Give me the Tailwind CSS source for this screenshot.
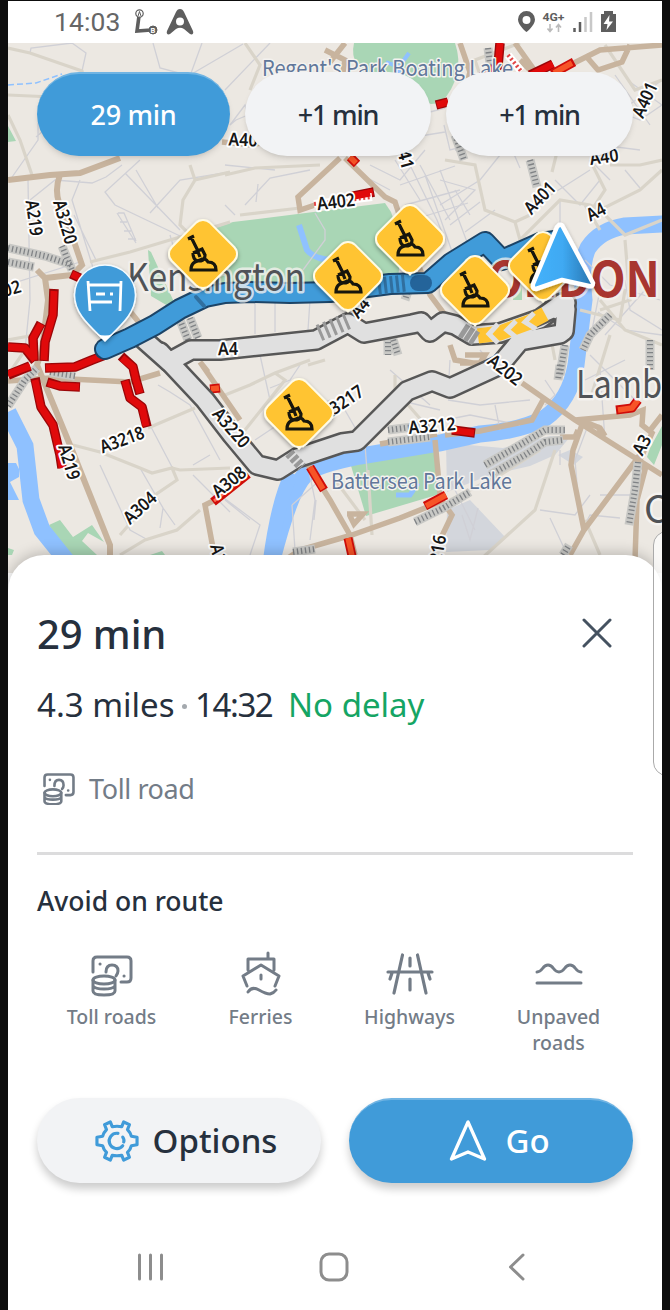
<!DOCTYPE html>
<html lang="en">
<head>
<meta charset="utf-8">
<title>Route overview</title>
<script src="https://cdn.jsdelivr.net/npm/@tailwindcss/browser@4"></script>
</head>
<body class="bg-[#0d0d0d] font-['Noto_Sans',sans-serif]">
<div class="relative ml-2 mt-px flex h-[1309px] w-[654px] flex-col overflow-hidden bg-white">

  <!-- Status bar -->
  <header class="flex h-[42px] shrink-0 items-center justify-between pl-[46px] pr-[46px] text-[#666]">
    <div class="flex items-center">
      <span class="w-[80px] font-['Roboto',sans-serif] text-[26.5px] leading-none tracking-[0.1px]">14:03</span>
      <svg width="24" height="28" viewBox="134 8 24 28" fill="none" stroke="#5e5e5e">
        <path d="M139 16L137 31L151 30" stroke-width="3.6"/>
        <circle cx="139.500" cy="13.500" r="3.700" fill="#fff" stroke-width="1.200"/>
        <path d="M138 16l1.500-4.500l1.500 4.500" stroke-width="1"/>
        <circle cx="153" cy="30" r="4" fill="#5e5e5e"/>
        <text x="150.600" y="32.800" font-size="7.500" font-weight="700" fill="#fff" stroke="none" font-family="Roboto">B</text>
      </svg>
      <svg class="ml-2" width="28" height="28" viewBox="166 8 28 28"><path fill="#5e5e5e" fill-rule="evenodd" d="M180 9c-2 0-3 1-4 3l-9 19c-1 3 1 4 3 3l6-5q4-2.500 8 0l6 5c2 1 4 0 3-3l-9-19c-1-2-2-3-4-3zm0 8.500a4 4 0 1 1 0 8a4 4 0 1 1 0-8z"/></svg>
    </div>
    <svg width="100" height="28" viewBox="516 8 100 28" fill="#5e5e5e">
      <path fill-rule="evenodd" d="M526.500 11a8.500 8.500 0 0 0-8.500 8.500c0 6 8.500 12.500 8.500 12.500s8.500-6.500 8.500-12.500a8.500 8.500 0 0 0-8.500-8.500zm0 5a4 4 0 1 1 0 8a4 4 0 1 1 0-8z"/>
      <text x="542.500" y="21" font-size="11.500" font-weight="700" font-family="Roboto" textLength="22" lengthAdjust="spacingAndGlyphs">4G+</text>
      <path d="M550 24v7m-2.500-2.500l2.500 3l2.500-3M558.500 32v-7m-2.500 2.500l2.500-3l2.500 3" fill="none" stroke="#bbb" stroke-width="1.600"/>
      <path d="M574.500 32v-4M580 32v-10" stroke="#5e5e5e" stroke-width="2.500"/><path d="M585.500 32v-15M591 32v-20" stroke="#c8c8c8" stroke-width="2.500"/>
      <path d="M604 11h9v3h3v18h-15v-18h3z"/>
      <path d="M609.500 15l-6 9h4l-1 6l6.500-8.500h-4z" fill="#fff"/>
    </svg>
  </header>

  <!-- Map -->
  <section class="relative h-[530px] shrink-0 bg-[#ece8e2]">
    <svg class="block" width="654" height="530" viewBox="8 43 654 530" font-family="Noto Sans, sans-serif">
      <defs>
        <g id="dig">
          <path d="M-8 27L0 37L8 27z" fill="#fffbe5"/>
          <rect x="-27" y="-27" width="54" height="54" rx="10" transform="rotate(45)" fill="#ffc431" stroke="#fffbe5" stroke-width="2"/>
          <path d="M-15-15L-9-18M-12-17L-5-3M-10-1L-1-5L2 1Q2 6-2 7L-6 7Q-10 5-10-1M-5-2L-3 3M-12 16Q-12 10-8 8L-3 6Q2 3 5 8Q13 8 13 16z" fill="none" stroke="#15120a" stroke-width="3.200"/>
        </g>
        <filter id="sh" x="-30%" y="-30%" width="160%" height="160%"><feDropShadow dx="0" dy="2" stdDeviation="2" flood-opacity=".35"/></filter>
      </defs>

      <!-- Parks and districts -->
      <g fill="#a9d6b5">
        <path d="M354 43H455Q466 75 441 103L431 104L380 85Q348 68 354 43z"/>
        <path d="M200 233L233 222L385 203L391 212L401 240L398 282L320 284L215 285z"/>
        <path d="M8 126L16 141L8 142zM148 250L151 252L174 302L168 306L151 296z"/>
        <path d="M349 459L435 442L440 494L366 516z"/>
        <path d="M49 525L60 520L73 537L92 525L104 542L88 533L82 541L97 555H66zM150 555l12-4l3 4zM8 548l6 2l-2 5h-4z"/>
        <path d="M662 426l-12 22l-3 9l7 8l8-20zM513 275h9v25h-9z"/>
      </g>
      <g fill="#d3d6dc"><path d="M446 443L503 448L550 436L570 437L555 455L530 466L490 475L447 492zM447 510L470 500L506 538L490 550L446 552zM558 455l12-5l13 7l-9 8z"/></g>

      <!-- Water -->
      <g fill="none" stroke="#8fc1ff">
        <path d="M8 412L25 446L31 500L42 530L70 565" stroke-width="17"/>
        <path d="M664 224L625 226Q600 230 588 248Q580 264 584 300L576 365Q570 400 545 418Q520 431 480 434L440 443L360 456Q315 465 305 475Q290 490 272 560" stroke-width="17"/>
        <path d="M292 473Q278 500 270 560" stroke-width="14"/>
        <path d="M299 225L307 250Q315 260 335 260L362 262L375 273" stroke-width="6"/>
        <path d="M396 495h14l8-12" stroke-width="5"/>
        <path d="M8 255L34 254L70 240" stroke-width="0"/>
        <path d="M8 85L36 83L62 74" stroke-width="1.500" stroke-dasharray="6 3"/>
        <path d="M386 62l13 5l10-14M399 67v8" stroke-width="4"/>
      </g>
      <path d="M8 463h8l3 6v8l-9 5l9 18h-11z" fill="#8fc1ff"/>

      <!-- Minor streets -->
      <g fill="none" stroke="#d0d0d6" stroke-width="1.300">
        <path d="M30 53L31 48L72 43M72 43L86 53L82 71M153 43L160 68L190 76L202 43M243 44L190 75M38 123V140L10 180M74 105L36 137M230 125L245 105L248 115L236 120zM270 43L225 90M30 200L55 180L92 183L106 177L122 165M140 160L105 192L115 205L180 236M125 173L180 230M150 213L180 180L230 172M136 170L158 208M74 215L96 260M117 213L136 243M118 213h6l12 28M120 222h7M124 231h7M128 239h8M80 180L72 200L90 258L100 290M170 235L175 252M28 180L30 300L25 350M8 285L80 262"/>
        <path d="M245 205L270 178L310 170M258 184L256 202M225 205L235 215M275 170L225 165M315 213L325 230V240L303 270M255 300V334M275 302V332M310 300L308 330M370 165L400 180L425 150M362 175L390 190M410 165L437 220L445 240M420 165L450 220M400 185L455 166M405 205L460 190M412 220L468 203M425 175L455 260M440 170L470 250M395 160L420 200"/>
        <path d="M444 125L450 150L490 140M400 120L445 108M408 138L445 132M455 150L510 145L520 168M440 180L475 190L445 220M455 190L470 215M440 205L480 180L500 155M450 225L480 202M465 232L495 210M555 180L580 205L600 180M560 200V230M535 205L590 170M590 160L610 180M615 75L650 125M630 82L662 105M640 150L600 145L580 125M625 170L640 188M662 80L620 112L640 120L662 105"/>
        <path d="M150 425L172 467M100 465L130 530L148 540M140 468L163 508L160 528M163 508L175 525M193 475L230 512M158 385L170 392L190 405L220 460M193 465L210 455M220 495L260 525L250 555M292 505L320 480M292 505L295 550M316 500L314 520M225 500L250 520M305 452L315 500L310 540M342 405L365 445L370 510"/>
        <path d="M448 400L480 405L530 400M495 405L500 430M445 420L470 415L520 425M540 510L575 515L590 495M550 518L565 550M582 530L590 515L620 518M450 480L475 530M462 515L470 540L478 508M600 495h35M590 420L575 460L580 520M600 370L605 440M590 355L635 400M560 450V465"/>
        <path d="M585 260L610 285L660 300M625 280L630 310L662 330M598 312L625 330L662 335M600 290L590 340M605 335L645 290M585 380L625 360M545 380L555 395L545 405M255 440L285 420L330 400M270 388L290 380L300 365M260 355L270 400M390 370L430 405M370 415L398 400L440 410M480 350L500 375M450 360L448 395"/>
      </g>
      <g fill="none" stroke="#d9d4c9" stroke-width="3.200">
        <path d="M8 48L30 53L82 71L90 105M8 95L75 98M8 115L20 140L32 175M190 165L195 180L183 200L180 225L190 235L230 222M230 222L130 252L90 262M245 43L260 65L250 90M240 215L300 208M195 180L230 172M225 175L255 168L320 165"/>
        <path d="M480 75L475 60L520 43M445 160L475 165L485 210L515 222L530 215M515 222L520 240L560 200L590 205L600 210L640 190L662 170M590 160L605 190L595 205L625 235L662 220M610 165L640 165L662 160M600 300L625 330L662 345M625 240L630 300L600 310M610 335L590 400M580 310L620 320L625 290M540 280L555 360M600 230L585 205"/>
        <path d="M148 428L195 408M73 445L100 452L140 468L152 473L172 468L177 480L155 495L120 535M172 468L180 470L230 468M100 452L115 440M120 555L145 540L177 530L200 510M275 373L285 380L245 430L230 440M225 395L250 385L275 373L310 360M395 375V390L430 430M308 365L325 360M335 480L365 520M368 470L372 535M450 500L500 475L540 450M555 450L535 510L480 560M585 520L600 555"/>
        <path d="M8 340L35 335M8 375L25 350M445 105L480 115L455 135M520 80L550 110L560 140L552 172M605 45L635 90L662 80"/>
      </g>
      <!-- Major roads -->
      <g fill="none" stroke="#c8b49e" stroke-width="5.500">
        <path d="M8 180L50 175L80 173L120 158M60 175Q52 195 65 215L82 265L72 275L45 278L37 270M45 278L48 300L42 350L37 365L70 445L110 545V560" stroke-width="6"/>
        <path d="M8 381L50 378L130 382L160 373M125 305L145 330L170 362M200 362L208 372M200 362L240 420M340 158L298 197L300 210L315 205M345 158L385 197L395 202L401 220L430 295L445 315"/>
        <path d="M325 50L345 60L340 90M345 43L330 62M222 142L250 145L280 140M460 43L470 72L468 80M520 60L535 75M515 43L545 85M540 80L600 50L662 45M585 55L598 70L622 62L630 45"/>
        <path d="M215 500L205 505L213 548M308 465L330 500L350 535L355 555M352 535L300 550L285 560M352 535L400 518L445 500M347 514h16l-9 10l-4-8M435 440L440 495M445 505L452 515L440 540"/>
        <path d="M380 444L437 434M445 435L480 431L532 420L543 400M522 383L575 420L662 475M575 420L630 415L643 410L642 425L652 433L640 460M583 422L573 450L571 465L584 530M584 530L640 455M584 530L570 555M560 437L575 437L578 430M580 420l20 8l5 8l-8-10M636 455L645 470L637 500L635 560M662 415L648 433"/>
        <path d="M450 345L455 360L485 365M465 355h20l-5 8h-20"/>
      </g>

      <!-- Railways -->
      <g fill="none" stroke="#c8c8c5" stroke-width="9">
        <path d="M8 248L45 256L72 265M8 262L34 267M62 246L72 270M8 406L25 380L37 368M50 372L75 376M180 320L188 340M190 318L198 338"/>
        <path d="M488 48L492 80M455 135L464 160M530 160L537 187M410 285L405 300M388 338V355M392 336L398 355"/>
        <path d="M485 465L520 445L545 430L565 430M490 475L525 455L545 442L563 440M440 510L470 492M610 315L590 335L583 350M565 345L560 375M650 340V370M638 462L635 490L629 525M388 430L430 425M388 442L430 437M415 522L445 507M293 552L315 549M560 365L558 380M563 555l6-10"/>
      </g>
      <g fill="none" stroke="#808386" stroke-width="6" stroke-dasharray="1.300 2.700">
        <path d="M8 248L45 256L72 265M8 262L34 267M62 246L72 270M8 406L25 380L37 368M50 372L75 376M180 320L188 340M190 318L198 338"/>
        <path d="M488 48L492 80M455 135L464 160M530 160L537 187M410 285L405 300M388 338V355M392 336L398 355"/>
        <path d="M485 465L520 445L545 430L565 430M490 475L525 455L545 442L563 440M440 510L470 492M610 315L590 335L583 350M565 345L560 375M650 340V370M638 462L635 490L629 525M388 430L430 425M388 442L430 437M415 522L445 507M293 552L315 549M560 365L558 380M563 555l6-10"/>
      </g>

      <!-- Traffic -->
      <g fill="none" stroke-linejoin="round">
        <path d="M54 289L53 315L45 342L44 361M41 323L33 338L34 361M8 347L25 348L35 361M8 375L30 366M45 368L75 367L92 360L105 355M47 382L60 386L80 387M35 378L41 407L53 425L60 455L62 468M121 356L133 367L136 380L140 394M125 380L130 398L142 407L147 427M71 274l9 4M349 197L374 192M500 43L498 66L480 78M530 75L553 64M436 105L448 102M452 430L475 433" stroke="#9b0709" stroke-width="9.500"/>
        <path d="M54 291L53 315L45 342L44 360M41 324L33 338L34 360M8 347L25 348L35 360M8 374L30 366M46 368L75 367L92 360L105 355M48 383L60 386L79 387M35 380L41 407L53 425L60 455L62 468M122 358L133 367L136 380L140 393M125 381L130 398L142 407L146 426M72 274l8 4M350 197L373 192M500 43L498 66L480 78M531 75L553 64M437 105L448 102M452 430L474 433" stroke="#e00a0b" stroke-width="6.800"/>
        <path d="M310 467L324 490M348 538L352 556M425 506L446 495M616 410L632 408L638 400M213 502L248 474M210 389l10-1M350 157l7 7M552 74L574 62" stroke="#cf0d0a" stroke-width="9"/>
        <path d="M310 467L323 489M348 538L352 556M426 506L446 495M618 410L632 408L638 400M350 157l6 6M554 73L572 63M211 389l8-1" stroke="#f75427" stroke-width="5.500"/>
        <path d="M214 501L247 475" stroke="#ff6d50" stroke-width="3"/>
        <path d="M314 204l58-7M508 55l13 16" stroke="#fff" stroke-width="8"/><path d="M314 204l58-7M508 55l13 16" stroke="#e14545" stroke-width="4" stroke-dasharray="2 2.500"/>
        <path d="M349 197L370 193" stroke="#e00a0b" stroke-width="7"/>
      </g>

      <!-- Alternative routes -->
      <g fill="none" stroke-linejoin="round" stroke-linecap="round">
        <g stroke="#575757" stroke-width="22">
          <path d="M142 338L169 362L191 350L220 350L316 340L348 323L364 333L412 324L421 322L430 332L443 322L455 325L472 335L500 333L540 319L562 303L566 303"/>
          <path d="M160 352L205 400L232 435L257 465L278 470L297 458L342 443L357 441L378 420L407 391L432 381L450 388L500 365L520 341L560 334L564 331L566 309"/>
        </g>
        <g stroke="#e0e0e0" stroke-width="17">
          <path d="M142 338L169 362L191 350L220 350L316 340L348 323L364 333L412 324L421 322L430 332L443 322L455 325L472 335L500 333L540 319L562 303L566 303"/>
          <path d="M160 352L205 400L232 435L257 465L278 470L297 458L342 443L357 441L378 420L407 391L432 381L450 388L500 365L520 341L560 334L564 331L566 309"/>
        </g>
        <path d="M510 332L535 327L554 319" stroke="#575757" stroke-width="2.500"/>
        <path d="M478 336L500 333L530 322L545 314" stroke="#ffc431" stroke-width="15" stroke-linecap="butt"/>
        <path d="M498 324l-9 10l9 9M516 321l-9 9l11 9M534 313l-9 9l11 7" stroke="#e0e0e0" stroke-width="5" stroke-linecap="butt" stroke-linejoin="miter"/>
        <path d="M319 333L350 320" stroke="#999" stroke-width="17" stroke-dasharray="3 4" stroke-linecap="butt"/>
        <path d="M462 330L476 339" stroke="#999" stroke-width="15" stroke-linecap="butt" stroke-dasharray="5 1"/>
        <path d="M289 453l13 14" stroke="#999" stroke-width="10" stroke-linecap="butt" stroke-dasharray="4 2"/>
        <path d="M105 349L130 338L155 325L180 309L205 297L225 293L250 292L290 293L330 292L360 288L390 284L428 283L451 263L485 242L502 260L540 243L555 241" stroke="#1c4467" stroke-width="22"/>
        <path d="M105 349L130 338L155 325L180 309L205 297L225 293L250 292L290 293L330 292L360 288L390 284L428 283L451 263L485 242L502 260L540 243L555 241" stroke="#409bd9" stroke-width="18"/>
        <path d="M378 286L406 283" stroke="#306f9f" stroke-width="17" stroke-dasharray="3 3" stroke-linecap="butt"/>
        <path d="M418 283h6" stroke="#24649a" stroke-width="16"/>
        <path d="M196 297l8 9" stroke="#306f9f" stroke-width="4"/>
      </g>

      <!-- Place names -->
      <g stroke="#f4f2ef" stroke-width="5" stroke-linejoin="round" paint-order="stroke" font-family="Noto Sans CJK SC, Noto Sans, sans-serif">
        <text x="262" y="76" font-size="22" textLength="251" lengthAdjust="spacingAndGlyphs" fill="#61779a" stroke-width="3">Regent's Park Boating Lake</text>
        <text x="331" y="489" font-size="22" textLength="181" lengthAdjust="spacingAndGlyphs" fill="#61779a" stroke-width="3">Battersea Park Lake</text>
        <text x="127" y="291" font-size="38" textLength="178" lengthAdjust="spacingAndGlyphs" fill="#505357" stroke-opacity=".8">Kensington</text>
        <text x="576" y="398" font-size="38" textLength="86" lengthAdjust="spacingAndGlyphs" fill="#505357">Lamb</text>
        <text x="644" y="523" font-size="38" fill="#505357">C</text>
        <text x="463" y="297" font-size="49" font-weight="700" textLength="197" lengthAdjust="spacingAndGlyphs" fill="#a83630" stroke-opacity=".75">LONDON</text>
      </g>
      <!-- Road numbers -->
      <g fill="#161616" stroke="#fff" stroke-width="4" stroke-linejoin="round" paint-order="stroke" font-size="18" font-weight="600" text-anchor="middle">
        <text transform="translate(34 218) rotate(82)" y="6" textLength="36" lengthAdjust="spacingAndGlyphs">A219</text>
        <text transform="translate(65 222) rotate(74)" y="6" textLength="45" lengthAdjust="spacingAndGlyphs">A3220</text>
        <text transform="translate(7 290) rotate(-16)" y="6" textLength="28" lengthAdjust="spacingAndGlyphs">402</text>
        <text transform="translate(243 140) rotate(2)" y="6" textLength="29" lengthAdjust="spacingAndGlyphs">A40</text>
        <text transform="translate(336 202) rotate(-7)" y="6" textLength="38" lengthAdjust="spacingAndGlyphs">A402</text>
        <text transform="translate(404 154) rotate(75)" y="6" textLength="31" lengthAdjust="spacingAndGlyphs">A41</text>
        <text transform="translate(360 308) rotate(-50)" y="6" textLength="20" lengthAdjust="spacingAndGlyphs">A4</text>
        <text transform="translate(228 349) rotate(-1)" y="6" textLength="20" lengthAdjust="spacingAndGlyphs">A4</text>
        <text transform="translate(540 198) rotate(-46)" y="6" textLength="37" lengthAdjust="spacingAndGlyphs">A401</text>
        <text transform="translate(645 100) rotate(-66)" y="6" textLength="37" lengthAdjust="spacingAndGlyphs">A401</text>
        <text transform="translate(604 157) rotate(-8)" y="6" textLength="29" lengthAdjust="spacingAndGlyphs">A40</text>
        <text transform="translate(596 212) rotate(-27)" y="6" textLength="19" lengthAdjust="spacingAndGlyphs">A4</text>
        <text transform="translate(505 370) rotate(38)" y="6" textLength="38" lengthAdjust="spacingAndGlyphs">A202</text>
        <text transform="translate(342 403) rotate(-34)" y="6" textLength="48" lengthAdjust="spacingAndGlyphs">A3217</text>
        <text transform="translate(231 428) rotate(49)" y="6" textLength="46" lengthAdjust="spacingAndGlyphs">A3220</text>
        <text transform="translate(122 440) rotate(-20)" y="6" textLength="46" lengthAdjust="spacingAndGlyphs">A3218</text>
        <text transform="translate(69 462) rotate(73)" y="6" textLength="36" lengthAdjust="spacingAndGlyphs">A219</text>
        <text transform="translate(140 508) rotate(-42)" y="6" textLength="38" lengthAdjust="spacingAndGlyphs">A304</text>
        <text transform="translate(229 482) rotate(-39)" y="6" textLength="38" lengthAdjust="spacingAndGlyphs">A308</text>
        <text transform="translate(432 426) rotate(-5)" y="6" textLength="47" lengthAdjust="spacingAndGlyphs">A3212</text>
        <text transform="translate(642 445) rotate(-60)" y="6" textLength="20" lengthAdjust="spacingAndGlyphs">A3</text>
        <text transform="translate(437 554) rotate(-80)" y="6" textLength="38" lengthAdjust="spacingAndGlyphs">A216</text>
        <text transform="translate(220 562) rotate(77)" y="6" textLength="36" lengthAdjust="spacingAndGlyphs">A219</text>
      </g>

      <!-- Pins -->
      <g filter="url(#sh)">
        <use href="#dig" x="203" y="254"/><use href="#dig" x="410" y="239"/><use href="#dig" x="348" y="276"/><use href="#dig" x="299" y="413"/><use href="#dig" x="543" y="266"/><use href="#dig" x="475" y="290"/>
        <path d="M105 265A30.500 30.500 0 0 0 74.500 295C74.500 314 90 326 105 341C120 326 135.500 314 135.500 295A30.500 30.500 0 0 0 105 265z" fill="#409bd9" stroke="#f4fbff" stroke-width="1.500"/>
        <path d="M97 334l8 7l8-7q-8 3-16 0z" fill="#fff"/>
        <path d="M88 281l2 30M121 281l-1 30M88 285h33M90 302h22M96 294h9M110 294h3" fill="none" stroke="#fff" stroke-width="2.800"/>
      </g>
      <defs><linearGradient id="arrow" x1="0" y1="0" x2="1" y2="0"><stop offset="0" stop-color="#45b2fb"/><stop offset=".5" stop-color="#3fa9f2"/><stop offset="1" stop-color="#2774ae"/></linearGradient></defs>
      <path filter="url(#sh)" d="M559 225Q562 224 563 227L593 283Q593 287 589 286L562 280L536 289Q532 289 533 284L557 227z" fill="url(#arrow)" stroke="#fff" stroke-width="4.500" stroke-linejoin="round"/>
    </svg>
    <!-- Route tabs -->
    <nav class="absolute inset-x-[29px] top-[29px] flex h-[84px] gap-[15px] text-[27px] font-medium text-[#26303d]">
      <button class="w-[193px] rounded-full border-t-2 border-[#70b4e3] bg-[#409bd9] tracking-[-0.3px] text-white shadow-md">29 min</button>
      <button class="w-[186px] rounded-full bg-[#f2f3f5] pt-0.5 tracking-[-1.2px] shadow-md">+1 min</button>
      <button class="w-[187px] rounded-full bg-[#f2f3f5] pt-0.5 tracking-[-1.2px] shadow-md">+1 min</button>
    </nav>
  </section>

  <!-- Route details -->
  <main class="relative -mt-[18px] flex h-[664px] shrink-0 flex-col rounded-t-[36px] bg-white px-[29px] pt-[54px] text-[#26303d] shadow-[0_-2px_14px_rgba(0,0,0,0.22)]">
    <div class="flex h-[50px] items-center justify-between">
      <h1 class="text-[40px] font-medium leading-[50px] tracking-[-0.1px]">29 min</h1>
      <svg class="mr-[20px]" width="32" height="32" viewBox="0 0 32 32"><path d="M3 2L29 28M29 2L3 28" fill="none" stroke="#455260" stroke-width="3" stroke-linecap="round"/></svg>
    </div>
    <p class="mt-[24px] flex h-[44px] items-center text-[33px] leading-[44px]">
      <span class="w-[137px] whitespace-nowrap">4.3 miles</span><span class="mx-[8px] mt-0.5 size-[5px] rounded-full bg-[#a4a9ae]"></span><span class="w-[93px] whitespace-nowrap tracking-[-1.4px]">14:32</span><span class="whitespace-nowrap text-[#15a564]">No delay</span>
    </p>
    <div class="mt-[42px] flex h-[40px] items-center pl-[6px] text-[27px] text-[#737c87]">
      <svg class="mr-[14px]" width="32" height="32" viewBox="0 0 42 42" fill="none" stroke="#737c87" stroke-width="3.400" stroke-linecap="round">
        <path d="M2 17V6q0-4 4-4h30q4 0 4 4v19q0 4-4 4h-6M15 17q0-8 6-8t6 7q0 3-2 5"/><ellipse cx="13" cy="26" rx="11" ry="4.500"/><path d="M2 26v11q0 4 11 4t11-4V26M2 32q2 3 11 3t11-3"/><path d="M9 9h.1M33 23h.1"/>
      </svg>
      <span class="tracking-[-0.4px]">Toll road</span>
    </div>
    <hr class="mt-[43px] h-[3px] shrink-0 border-0 bg-[#dcdcdd]">
    <h2 class="mt-[28px] h-[36px] whitespace-nowrap text-[26.5px] font-medium leading-[36px]">Avoid on route</h2>
    <div class="mt-[31px] grid h-[111px] grid-cols-4 text-center text-[19.500px] font-medium leading-[26px] text-[#737c87]">
      <div class="flex flex-col items-center gap-[6px]">
        <svg width="44" height="48" viewBox="-1 -5 44 48" fill="none" stroke="#737c87" stroke-width="3" stroke-linecap="round"><path d="M2 17V6q0-4 4-4h30q4 0 4 4v17q0 4-4 4h-6M15 17q0-7 6-7t6 6q0 2-2 5"/><ellipse cx="13" cy="25" rx="11" ry="4"/><path d="M2 25v11q0 4 11 4t11-4V25M2 31q2 3 11 3t11-3"/><path d="M9 9h.1M33 21h.1"/></svg>
        Toll roads</div>
      <div class="flex flex-col items-center gap-[6px]">
        <svg width="44" height="48" viewBox="0 -1 44 48" fill="none" stroke="#737c87" stroke-width="3" stroke-linecap="round" stroke-linejoin="round"><path d="M9 19V8h26v11M29 7V2M8 35L4 25L22 14L40 25L36 35M22 24v4M9 41Q13 35 20 39T31 43Q35 42 37 39"/></svg>
        Ferries</div>
      <div class="flex flex-col items-center gap-[6px]">
        <svg width="50" height="48" viewBox="0 -1 50 48" fill="none" stroke="#737c87" stroke-width="3.200" stroke-linecap="round"><path d="M17.500 4L9 42M32.500 4L41 42M3 21h44M25 7v8M25 28v11M7 22l-2 6M43 22l2 6"/></svg>
        Highways</div>
      <div class="flex flex-col items-center gap-[6px]">
        <svg width="50" height="48" viewBox="0 -1 50 48" fill="none" stroke="#737c87" stroke-width="3" stroke-linecap="round"><path d="M3 21C9 21 8 14 14 14S19 21 25 21S30 14 36 14S41 21 47 21M3 32h44"/></svg>
        <span class="w-[100px]">Unpaved roads</span></div>
    </div>
    <div class="mt-[37px] flex h-[85px] shrink-0 gap-[28px] text-[33px] font-medium">
      <button class="flex w-[284px] items-center justify-center gap-[13px] rounded-full bg-[#f2f3f5] pl-[13px] shadow-[0_6px_9px_rgba(0,0,0,0.2)]">
        <svg width="46" height="42" viewBox="-24 -22 48 44" fill="none" stroke="#409bd9" stroke-width="3.300" stroke-linejoin="round" stroke-linecap="round">
          <path d="M-5-15Q0-16 5-15L7-20L13-17L11-12Q14-9 15-5L21-4V4L15 5Q14 9 11 12L13 17L7 20L5 15Q0 16-5 15L-7 20L-13 17L-11 12Q-14 9-15 5L-21 4V-4L-15-5Q-14-9-11-12L-13-17L-7-20z"/>
          <path d="M1-8A8 8 0 1 0 6 5M6-4Q8-1 7 1"/>
        </svg><span>Options</span></button>
      <button class="flex w-[284px] items-center justify-center gap-[18px] rounded-full border-t-2 border-[#70b4e3] bg-[#409bd9] pb-0.5 pl-[17px] text-white shadow-[0_6px_9px_rgba(0,0,0,0.2)]">
        <svg width="38" height="42" viewBox="0 0 38 42"><path d="M19 2L2.500 39L19 32L35.500 39z" fill="none" stroke="#fff" stroke-width="3.300" stroke-linejoin="round"/></svg><span>Go</span></button>
    </div>
  </main>

  <!-- System navigation -->
  <footer class="relative flex flex-1 items-center justify-between bg-white pl-[128px] pr-[131px] pt-[5px]">
    <svg width="30" height="30" viewBox="0 0 30 30"><path d="M3.500 3v24M14.500 3v24M25.500 3v24" stroke="#8d8d8d" stroke-width="3" stroke-linecap="round"/></svg>
    <svg class="ml-[4px]" width="32" height="30" viewBox="0 0 32 30"><rect x="3" y="2" width="26" height="26" rx="8" fill="none" stroke="#8d8d8d" stroke-width="3"/></svg>
    <svg width="34" height="30" viewBox="0 0 34 30"><path d="M26 3L13.500 15L26 27" fill="none" stroke="#8d8d8d" stroke-width="3" stroke-linecap="round" stroke-linejoin="round"/></svg>
  </footer>

  <!-- Edge panel handle, over the map and sheet -->
  <div class="absolute -right-[20px] top-[530px] h-[245px] w-[29px] rounded-[14px] border border-[#aaa] bg-white/70"></div>
</div>
</body>
</html>
